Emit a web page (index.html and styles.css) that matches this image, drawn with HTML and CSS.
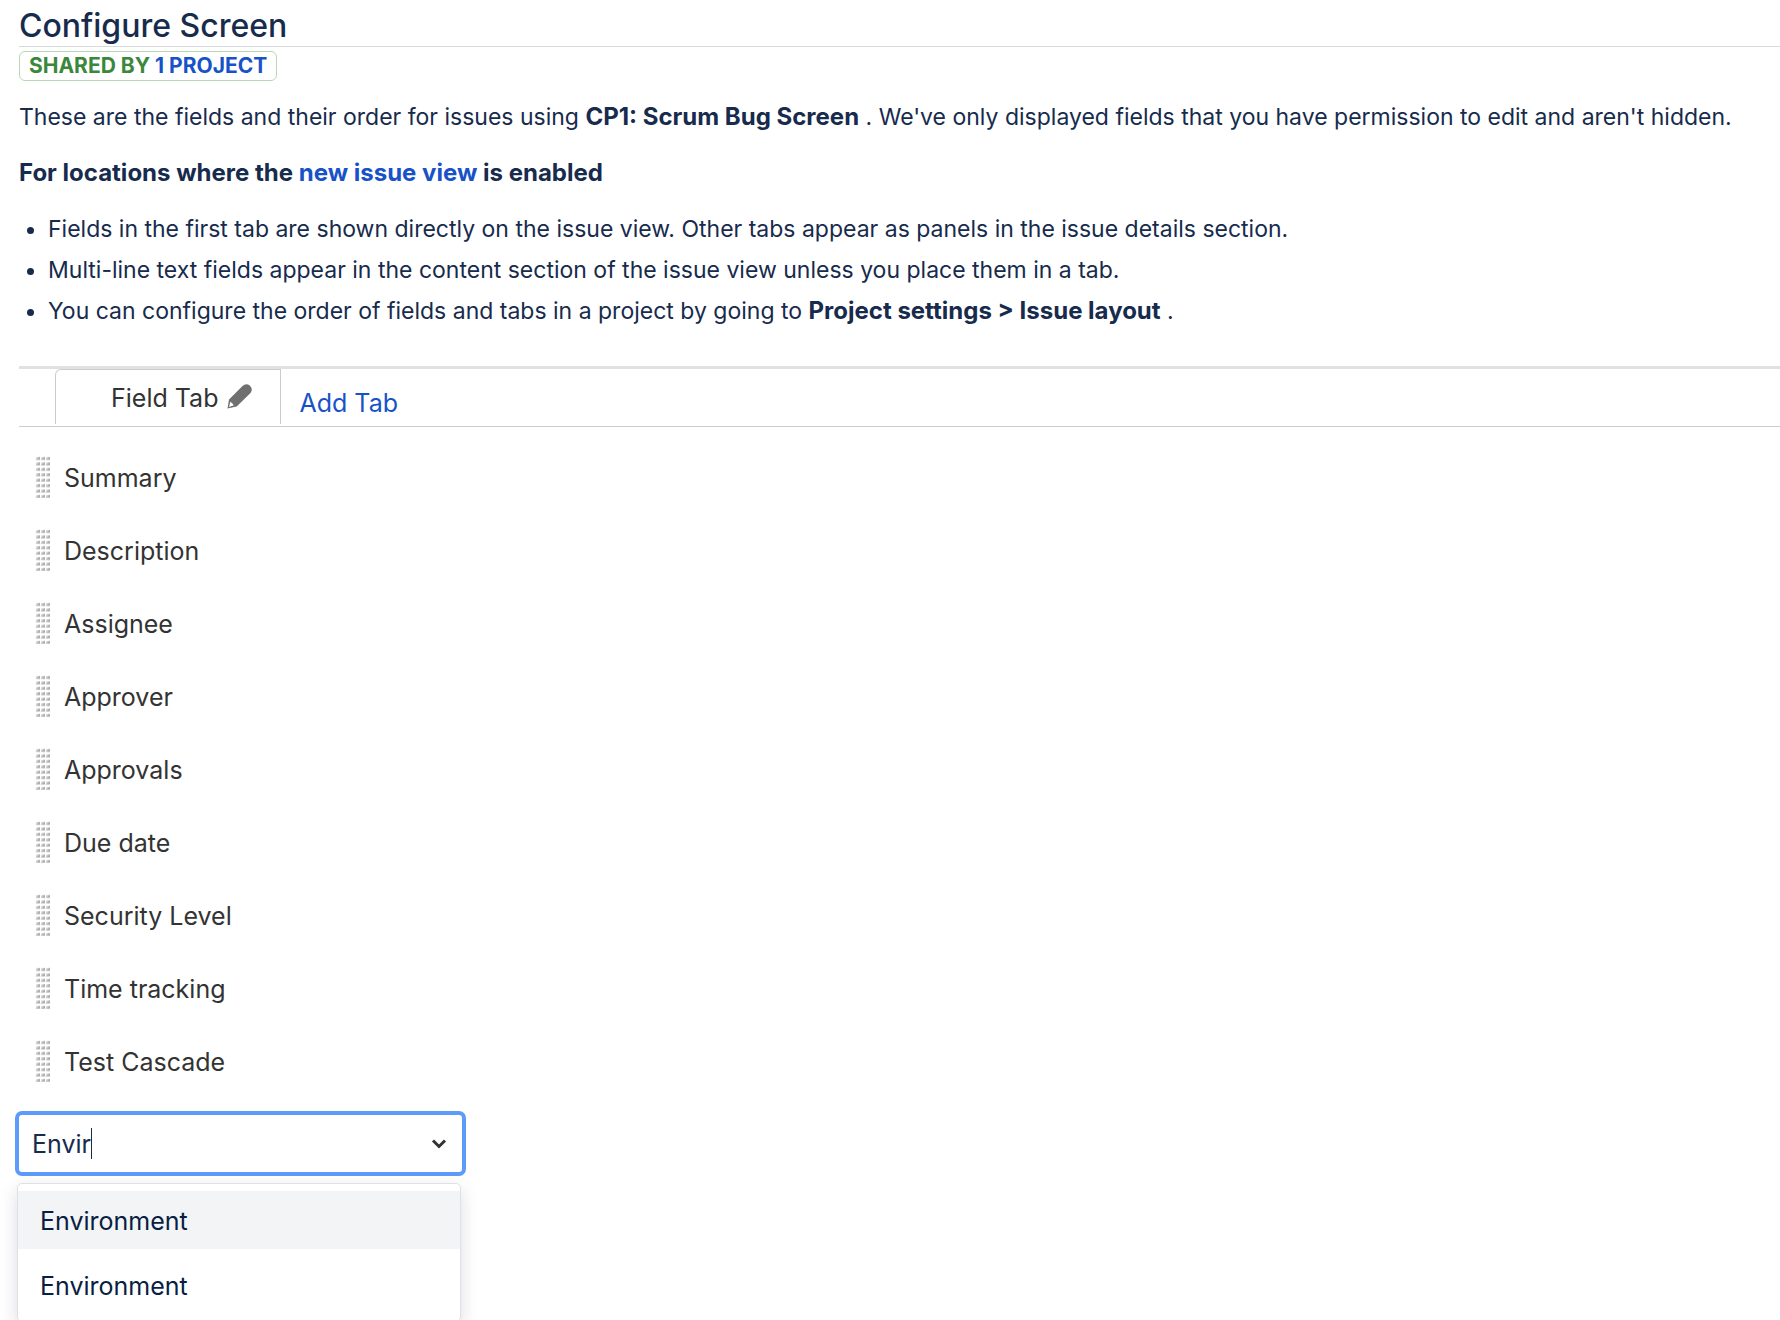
FILE: index.html
```html
<!DOCTYPE html>
<html lang="en">
<head>
    <meta charset="UTF-8">
    <meta name="viewport" content="width=device-width, initial-scale=1.0">
    <title>Configure Screen</title>
    <link rel="stylesheet" href="styles.css">
</head>
<body>
    <main class="page">
        <h1>Configure Screen</h1>
        <div class="shared">Shared by <a href="#">1 project</a></div>
        <p class="intro">These are the fields and their order for issues using <strong>CP1: Scrum Bug Screen</strong> . We've only displayed fields that you have permission to edit and aren't hidden.</p>
        <p class="intro"><strong>For locations where the <a href="#">new issue view</a> is enabled</strong></p>
        <ul class="notes">
            <li>Fields in the first tab are shown directly on the issue view. Other tabs appear as panels in the issue details section.</li>
            <li>Multi-line text fields appear in the content section of the issue view unless you place them in a tab.</li>
            <li>You can configure the order of fields and tabs in a project by going to <strong>Project settings &gt; Issue layout</strong> .</li>
        </ul>

        <div class="tabs">
            <div class="tab">
                <span>Field Tab</span>
                <button class="edit" type="button" aria-label="Rename tab">
                    <svg width="25" height="25" viewBox="0 0 25 25">
                        <path fill="#707070" fill-rule="evenodd" d="M0.5 24.5 L2 15.5 L15.5 2 Q19-1.2 22.8 1.6 Q26.4 5.6 23.5 9 L9.7 22.6 Z M3.3 17.8 L2 23 L6.8 21.3 L5.5 19.4 Z"/>
                    </svg>
                </button>
            </div>
            <a class="add" href="#">Add Tab</a>
        </div>

        <ul class="fields">
            <li><span class="grip"></span>Summary</li>
            <li><span class="grip"></span>Description</li>
            <li><span class="grip"></span>Assignee</li>
            <li><span class="grip"></span>Approver</li>
            <li><span class="grip"></span>Approvals</li>
            <li><span class="grip"></span>Due date</li>
            <li><span class="grip"></span>Security Level</li>
            <li><span class="grip"></span>Time tracking</li>
            <li><span class="grip"></span>Test Cascade</li>
        </ul>

        <div class="picker">
            <div class="box">
                <input id="field" type="text" value="Envir" aria-label="Select field" autocomplete="off" autofocus>
                <span class="caret"></span>
                <svg width="16" height="12" viewBox="0 0 16 12">
                    <path fill="none" stroke="#333" stroke-width="3" d="M2 2.5 L8 8.5 L14 2.5"/>
                </svg>
            </div>
            <div class="menu">
                <button class="active" type="button">Environment</button>
                <button type="button">Environment</button>
            </div>
        </div>
    </main>
</body>
</html>
```

FILE: styles.css
```css
*{box-sizing: border-box;}
body{
    margin: 0;
    background-color: #fff;
    color: #172b4d;
    font: 23px/32px Inter, "Liberation Sans", sans-serif;
}
a{
    color: #1852c8;
    text-decoration: none;
}
button, input{
    font: inherit;
    color: inherit;
    border: 0;
    background: none;
    padding: 0;
}
strong{
    font-size: 24px;
}
h1{
    margin: 0;
    padding: 6px 0 0;
    font-size: 32px;
    line-height: 40px;
    font-weight: 500;
    border-bottom: 1px solid #d8dadd;
}
ul{
    list-style: none;
    margin: 0;
    padding: 0;
}
.page{
    padding-left: 19px;
}
.shared{
    display: inline-block;
    margin-top: 4px;
    padding: 0 9px;
    border: 1px solid #b8d8b8;
    border-radius: 6px;
    color: #3b873b;
    font-size: 21px;
    line-height: 28px;
    font-weight: 700;
    text-transform: uppercase;
}
.intro{
    margin: 0 0 24px;
}
.shared + .intro{
    margin-top: 20px;
}
.notes{
    list-style: disc;
    padding-left: 29px;
}
.notes li{
    margin-bottom: 9px;
}
.tabs{
    display: flex;
    margin-top: 39px;
    padding-left: 36px;
    border-top: 3px solid #dfe1e5;
    border-bottom: 1px solid #ccc;
    font-size: 25px;
}
.tab{
    display: flex;
    align-items: center;
    gap: 9px;
    height: 55px;
    margin-bottom: 2px;
    padding: 2px 28px 0 55px;
    border: 1px solid #ccc;
    border-bottom: 0;
    border-top-left-radius: 6px;
    color: #333;
}
.edit{
    display: flex;
    margin-bottom: 4px;
}
.add{
    padding: 18px 18px 0;
}
.fields{
    margin-top: 14px;
    color: #333;
    font-size: 25px;
}
.fields li{
    display: flex;
    align-items: center;
    height: 73px;
    padding-left: 16px;
}
/* 3 x 8 dots, white lines cut the shaded tiles apart */
.grip{
    width: 15px;
    height: 43px;
    margin: 0 14px 3px 0;
    background:
        linear-gradient(#fff 2px, transparent 2px) 0 0 / 5px 5px repeat space,
        linear-gradient(90deg, #fff 1px, transparent 1px) 0 0 / 5px 5px repeat space,
        linear-gradient(135deg, #fff 20%, #ddd 45%, #aaa 75%, #bbb 100%) 0 0 / 5px 5px repeat space;
}
.picker{
    width: 451px;
    margin: 13px 0 0 -4px;
    font-size: 25px;
}
.box{
    display: flex;
    align-items: center;
    height: 65px;
    padding: 0 15px 0 13px;
    border: 4px solid #5c9bfa;
    border-radius: 7px;
}
.box input{
    field-sizing: content;
    outline: 0;
    caret-color: transparent;
}
.box svg{
    margin-left: auto;
}
.caret{
    width: 1px;
    height: 31px;
    background-color: #172b4d;
}
.menu{
    display: flex;
    flex-direction: column;
    gap: 7px;
    margin: 7px 5px 0 2px;
    padding: 7px 0;
    border: 1px solid #dfe1e5;
    border-radius: 5px;
    box-shadow: 0 6px 18px rgba(9, 30, 66, .15);
    color: #091e42;
}
.menu button{
    height: 58px;
    padding: 2px 0 0 22px;
    text-align: left;
}
.menu .active{
    background-color: #f3f4f6;
}
```
